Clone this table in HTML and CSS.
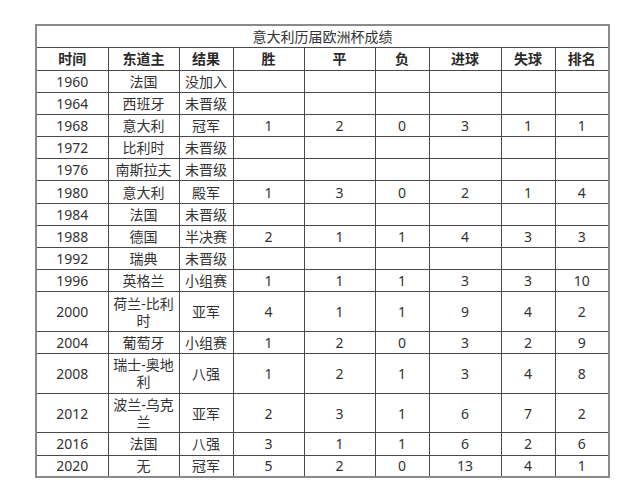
FILE: index.html
```html
<!DOCTYPE html>
<html lang="zh-CN">
<head>
<meta charset="utf-8">
<title>意大利历届欧洲杯成绩</title>
<link rel="stylesheet" href="styles.css">
</head>
<body>
<div class="page">
<table class="results">
  <colgroup>
    <col class="w72"><col class="w71"><col class="w54"><col class="w71"><col class="w71"><col class="w54"><col class="w72"><col class="w54"><col class="w54">
  </colgroup>
  <tr class="title"><td colspan="9">意大利历届欧洲杯成绩</td></tr>
  <tr class="head"><th>时间</th><th>东道主</th><th>结果</th><th>胜</th><th>平</th><th>负</th><th>进球</th><th>失球</th><th>排名</th></tr>
  <tr><td>1960</td><td>法国</td><td>没加入</td><td></td><td></td><td></td><td></td><td></td><td></td></tr>
  <tr><td>1964</td><td>西班牙</td><td>未晋级</td><td></td><td></td><td></td><td></td><td></td><td></td></tr>
  <tr><td>1968</td><td>意大利</td><td>冠军</td><td>1</td><td>2</td><td>0</td><td>3</td><td>1</td><td>1</td></tr>
  <tr><td>1972</td><td>比利时</td><td>未晋级</td><td></td><td></td><td></td><td></td><td></td><td></td></tr>
  <tr><td>1976</td><td>南斯拉夫</td><td>未晋级</td><td></td><td></td><td></td><td></td><td></td><td></td></tr>
  <tr><td>1980</td><td>意大利</td><td>殿军</td><td>1</td><td>3</td><td>0</td><td>2</td><td>1</td><td>4</td></tr>
  <tr><td>1984</td><td>法国</td><td>未晋级</td><td></td><td></td><td></td><td></td><td></td><td></td></tr>
  <tr><td>1988</td><td>德国</td><td>半决赛</td><td>2</td><td>1</td><td>1</td><td>4</td><td>3</td><td>3</td></tr>
  <tr><td>1992</td><td>瑞典</td><td>未晋级</td><td></td><td></td><td></td><td></td><td></td><td></td></tr>
  <tr><td>1996</td><td>英格兰</td><td>小组赛</td><td>1</td><td>1</td><td>1</td><td>3</td><td>3</td><td>10</td></tr>
  <tr class="tall"><td>2000</td><td>荷兰-比利时</td><td>亚军</td><td>4</td><td>1</td><td>1</td><td>9</td><td>4</td><td>2</td></tr>
  <tr><td>2004</td><td>葡萄牙</td><td>小组赛</td><td>1</td><td>2</td><td>0</td><td>3</td><td>2</td><td>9</td></tr>
  <tr class="tall"><td>2008</td><td>瑞士-奥地利</td><td>八强</td><td>1</td><td>2</td><td>1</td><td>3</td><td>4</td><td>8</td></tr>
  <tr class="tall"><td>2012</td><td>波兰-乌克兰</td><td>亚军</td><td>2</td><td>3</td><td>1</td><td>6</td><td>7</td><td>2</td></tr>
  <tr><td>2016</td><td>法国</td><td>八强</td><td>3</td><td>1</td><td>1</td><td>6</td><td>2</td><td>6</td></tr>
  <tr><td>2020</td><td>无</td><td>冠军</td><td>5</td><td>2</td><td>0</td><td>13</td><td>4</td><td>1</td></tr>
</table>
</div>
</body>
</html>
```

FILE: styles.css
```css
html, body {
  margin: 0;
  padding: 0;
  background: #ffffff;
}

.page {
  padding: 24px 0 0 35px;
}

.results {
  border-collapse: collapse;
  table-layout: fixed;
  width: 574px;
  font-family: "Noto Sans", "Noto Sans CJK SC", sans-serif;
  font-size: 14px;
  color: #333333;
  border: 2px solid #8a8a8a;
}

.w72 { width: 72px; }
.w71 { width: 71px; }
.w54 { width: 54px; }

.results td,
.results th {
  border: 1px solid #4a4a4a;
  text-align: center;
  vertical-align: middle;
  padding: 0 4px;
  line-height: 17px;
  height: 22.2px;
  box-sizing: border-box;
}

.results th {
  font-weight: bold;
  color: #2a2a2a;
  height: 23px;
}

.results .title td {
  height: 22px;
  font-weight: normal;
}

.results .tall td {
  height: 39.6px;
}
```
